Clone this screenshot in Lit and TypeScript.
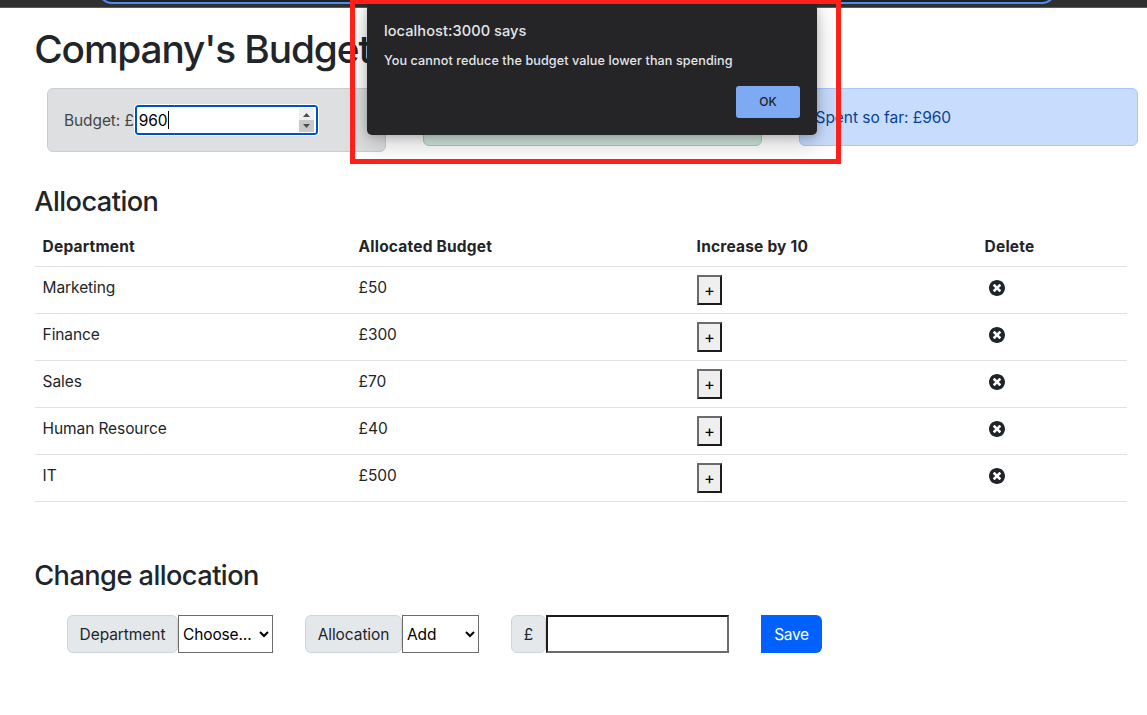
import { LitElement, html, css } from "lit";
import { customElement, state } from "lit/decorators.js";

interface Expense {
  name: string;
  cost: number;
}

@customElement("app-root")
class AppRoot extends LitElement {
  @state() private expenses: Expense[] = [
    { name: "Marketing", cost: 50 },
    { name: "Finance", cost: 300 },
    { name: "Sales", cost: 70 },
    { name: "Human Resource", cost: 40 },
    { name: "IT", cost: 500 },
  ];

  static styles = css`
    :host {
      display: block;
      position: relative;
      height: 715px;
      overflow: hidden;
      background: #fff;
      color: #212529;
      font-family: Inter, "Liberation Sans", sans-serif;
      font-size: 15.5px;
      line-height: 24px;
      letter-spacing: -0.1px;
    }
    * { box-sizing: border-box; }
    h1, h3 { margin: 0 0 0 -0.8px; font-weight: 500; }

    .chrome {
      height: 8px;
      overflow: hidden;
      background: #2f2f2f;
      border-bottom: 1px solid #5a5a5a;
      padding-left: 98px;
    }
    .omnibox {
      width: 958px;
      height: 28px;
      margin-top: -24px;
      border: 2px solid #4f8df0;
      border-radius: 14px;
      background: #202124;
    }

    .page { padding: 17px 20px 0 35px; }
    h1 { font-size: 38.8px; line-height: 48px; letter-spacing: -1.1px; }
    h3 { font-size: 27.2px; line-height: 34px; letter-spacing: -0.55px; }

    .cards {
      display: grid;
      grid-template-columns: repeat(3, 339px);
      column-gap: 37px;
      align-items: start;
      height: 64px;
      margin: 15px 0 33px 12px;
    }
    .card { height: 58px; padding: 17px 16px 15px; border: 1px solid; border-radius: 6px; white-space: nowrap; }
    .budget { display: flex; align-items: center; height: 64px; padding: 16px; background: #dedfe1; border-color: #cbccce; color: #41464b; }
    .budget span { position: relative; top: 1px; }
    .remaining { background: #d1e7dd; border-color: #a3cfbb; color: #0f5132; }
    .spent { padding-left: 15.5px; background: #c8dcfd; border-color: #a6c8fb; color: #084298; letter-spacing: -0.04px; }
    .number {
      display: flex;
      align-items: center;
      width: 183px;
      height: 30px;
      margin-left: 1px;
      padding: 0 2px;
      border: 2px solid #0052c2;
      border-radius: 3px;
      outline: 1px solid #fff;
      background: #fff;
      color: #000;
    }
    .number .caret { top: 0; width: 1px; height: 18px; background: #000; }
    .spin { margin-left: auto; display: block; }

    table { width: 1092px; margin-top: 7px; border-collapse: collapse; table-layout: fixed; }
    th, td { height: 47px; padding: 9px 8px 7px 7.6px; border-bottom: 1px solid #dee2e6; text-align: left; vertical-align: top; }
    th { height: 40px; padding-bottom: 6px; font-weight: 700; letter-spacing: 0.2px; }
    .c1 { width: 316px; }
    .c2 { width: 338px; }
    .c3 { width: 288px; }
    .plus {
      display: block;
      width: 25px;
      height: 30px;
      margin: -1px 0 0 0.4px;
      padding: 0;
      border: 2px solid;
      border-color: #6b6b6b #1c1c1c #1c1c1c #6b6b6b;
      background: #efefef;
      color: #000;
      line-height: 24px;
      font-family: inherit;
      font-size: 16.5px;
      text-align: center;
    }
    .del { display: block; margin: 4px 0 0 4.4px; }

    .title { margin-top: 57px; }
    .form { display: flex; gap: 32px; margin: 22px 0 0 32px; }
    .group { display: flex; height: 38px; }
    .label { padding: 7px 0 5px; border: 1px solid #ced4da; border-radius: 6px; background: #e5e8eb; text-align: center; letter-spacing: -0.08px; }
    .w1 { width: 111px; }
    .w2 { width: 97px; }
    .w3 { width: 35px; }
    select {
      height: 38px;
      margin: 0;
      padding: 1px 0 0;
      border: 1px solid #6b6b6b;
      border-radius: 0;
      background: #fff;
      color: #000;
      font: inherit;
      letter-spacing: -0.13px;
    }
    .s1 { width: 95px; }
    .s2 { width: 77px; }
    .amount {
      width: 183px;
      height: 38px;
      margin: 0;
      border: 2px solid;
      border-color: #1c1c1c #6b6b6b #6b6b6b #1c1c1c;
      border-radius: 0;
      background: #fff;
      font: inherit;
    }
    .save {
      width: 61px;
      height: 38px;
      padding: 2px 0 0;
      border: 0;
      border-radius: 0 6px 6px 0;
      background: #0161fe;
      color: #fff;
      font: inherit;
      letter-spacing: -0.3px;
    }

    .dialog {
      position: absolute;
      left: 367px;
      top: 4px;
      width: 450px;
      height: 131px;
      padding: 17px;
      border-radius: 5px;
      background: #252528;
      color: #e4e5e8;
      box-shadow: 0 8px 24px rgba(0, 0, 0, 0.22), 0 1px 8px rgba(0, 0, 0, 0.2);
      display: flex;
      flex-direction: column;
    }
    .origin { font-size: 14.6px; line-height: 20px; font-weight: 500; letter-spacing: 0.06px; }
    .msg { margin-top: 10px; font-size: 12.6px; line-height: 20px; font-weight: 500; letter-spacing: 0.1px; }
    .ok {
      align-self: flex-end;
      width: 64px;
      height: 32px;
      margin-top: 15px;
      padding: 0;
      border: 0;
      border-radius: 3px;
      background: #7daaf3;
      color: #202124;
      font: 500 12px/32px Inter, sans-serif;
    }
    .frame {
      position: absolute;
      left: 350px;
      top: -1px;
      width: 491px;
      height: 165px;
      border: 5px solid #ff2119;
      pointer-events: none;
    }
  `;

  private get spent() {
    return this.expenses.reduce((sum, e) => sum + e.cost, 0);
  }

  private row(e: Expense) {
    return html`<tr>
      <td>${e.name}</td>
      <td>£${e.cost}</td>
      <td><button class="plus">+</button></td>
      <td>
        <svg class="del" width="16" height="16" viewBox="8 8 496 496" fill="#212529">
          <path d="M256 8C119 8 8 119 8 256s111 248 248 248 248-111 248-248S393 8 256 8zm121.6 313.1c4.7 4.7 4.7 12.3 0 17L338 377.6c-4.7 4.7-12.3 4.7-17 0L256 312l-65.1 65.6c-4.7 4.7-12.3 4.7-17 0L134.4 338c-4.7-4.7-4.7-12.3 0-17l65.6-65-65.6-65.1c-4.7-4.7-4.7-12.3 0-17l39.6-39.6c4.7-4.7 12.3-4.7 17 0l65 65.7 65.1-65.6c4.7-4.7 12.3-4.7 17 0l39.6 39.6c4.7 4.7 4.7 12.3 0 17L312 256l65.6 65.1z"/>
        </svg>
      </td>
    </tr>`;
  }

  render() {
    return html`
      <div class="chrome"><div class="omnibox"></div></div>
      <main class="page">
        <h1>Company's Budget</h1>
        <section class="cards">
          <div class="card budget">
            <span>Budget: £</span>
            <div class="number">
              <span>${this.spent}</span><span class="caret"></span>
              <svg class="spin" width="15" height="24" viewBox="0 0 15 24">
                <rect width="15" height="12" fill="#efefef"/>
                <rect y="12" width="15" height="12" fill="#c9c9c9"/>
                <path d="M4 9 7.5 5 11 9zM4 16h7l-3.5 4z" fill="#4d4d4d"/>
              </svg>
            </div>
          </div>
          <div class="card remaining"></div>
          <div class="card spent">Spent so far: £${this.spent}</div>
        </section>
        <h3>Allocation</h3>
        <table>
          <thead>
            <tr>
              <th class="c1">Department</th>
              <th class="c2">Allocated Budget</th>
              <th class="c3">Increase by 10</th>
              <th>Delete</th>
            </tr>
          </thead>
          <tbody>${this.expenses.map((e) => this.row(e))}</tbody>
        </table>
        <h3 class="title">Change allocation</h3>
        <div class="form">
          <div class="group">
            <label class="label w1">Department</label>
            <select class="s1"><option>Choose...</option></select>
          </div>
          <div class="group">
            <label class="label w2">Allocation</label>
            <select class="s2"><option>Add</option><option>Reduce</option></select>
          </div>
          <div class="group">
            <span class="label w3">£</span>
            <input class="amount" type="number" />
          </div>
          <button class="save">Save</button>
        </div>
      </main>
      <div class="dialog" role="alertdialog">
        <div class="origin">localhost:3000 says</div>
        <div class="msg">You cannot reduce the budget value lower than spending</div>
        <button class="ok">OK</button>
      </div>
      <div class="frame"></div>
    `;
  }
}
